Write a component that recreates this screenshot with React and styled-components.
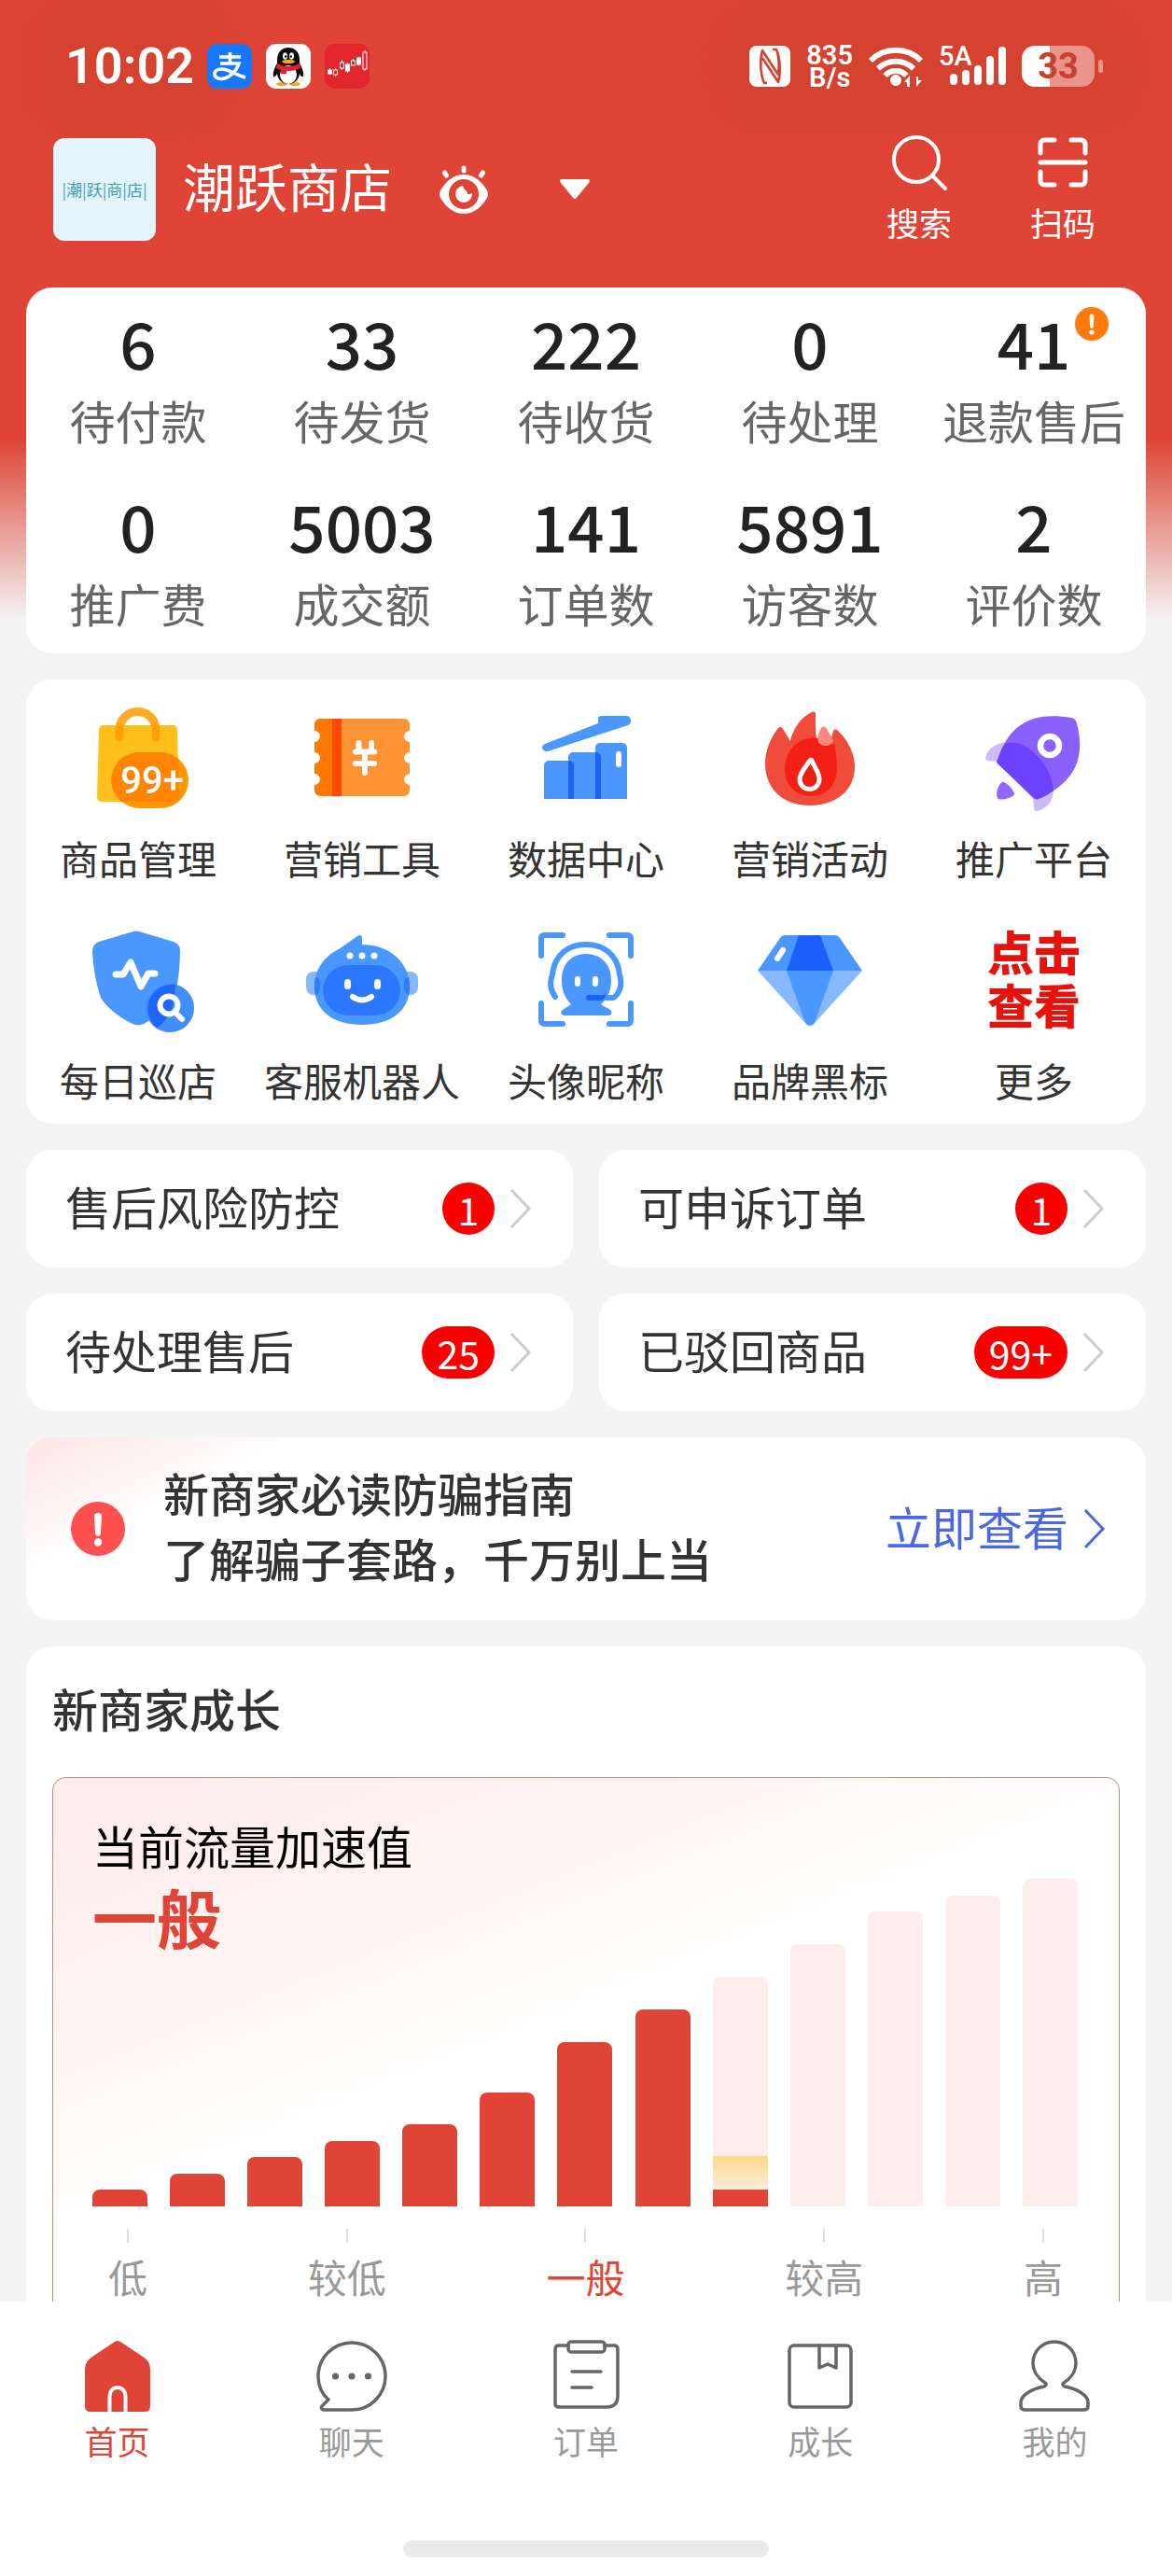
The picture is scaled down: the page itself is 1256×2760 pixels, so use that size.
import React from "react";
import styled, { createGlobalStyle, css } from "styled-components";

const RED = "#df4436";
const BLUE = "#4a98ff";

const stats = [
  { value: "6", label: "待付款" },
  { value: "33", label: "待发货" },
  { value: "222", label: "待收货" },
  { value: "0", label: "待处理" },
  { value: "41", label: "退款售后", alert: true },
  { value: "0", label: "推广费" },
  { value: "5003", label: "成交额" },
  { value: "141", label: "订单数" },
  { value: "5891", label: "访客数" },
  { value: "2", label: "评价数" }
];

const todos = [
  { label: "售后风险防控", count: "1" },
  { label: "可申诉订单", count: "1" },
  { label: "待处理售后", count: "25" },
  { label: "已驳回商品", count: "99+" }
];

const bars = [18, 35, 53, 70, 88, 122, 176, 211, 246, 281, 316, 333, 351];
const CURRENT = 8;

const levels = ["低", "较低", "一般", "较高", "高"];

/* ---------- status bar icons ---------- */

const AlipayIcon = () => (
  <svg width="48" height="48" viewBox="0 0 48 48">
    <rect width="48" height="48" rx="11" fill="#1677ff" />
    <path
      d="M13 14h23M24.500 9v12M14 21h20c-2 6-6 11-11 14-6 4-15 3-15-3 0-5 7-6 13-4 6 2 12 6 20 8"
      fill="none"
      stroke="#fff"
      strokeWidth="3.600"
    />
  </svg>
);

const PenguinIcon = () => (
  <svg width="48" height="48" viewBox="0 0 48 48">
    <rect width="48" height="48" rx="11" fill="#fff" />
    <ellipse cx="17" cy="43" rx="6" ry="2" fill="#fba61b" />
    <ellipse cx="31" cy="43" rx="6" ry="2" fill="#fba61b" />
    <path
      d="M24 4c-8 0-12 6-12 13v4c-3 5-5 10-4 14 1 1 3-1 4-3 1 7 6 11 12 11s11-4 12-11c1 2 3 4 4 3 1-4-1-9-4-14v-4c0-7-4-13-12-13z"
      fill="#0b0b0b"
    />
    <ellipse cx="24" cy="33" rx="9" ry="10" fill="#fff" />
    <path d="M12 21c7 4 17 4 24 0l1 5c-8 4-18 4-26 0z" fill="#e5202c" />
    <path d="M16 26h6v6h-6z" fill="#e5202c" />
    <ellipse cx="20.500" cy="13" rx="2.500" ry="3.800" fill="#fff" />
    <ellipse cx="27.500" cy="13" rx="2.500" ry="3.800" fill="#fff" />
    <circle cx="21.200" cy="13.500" r="1.200" fill="#000" />
    <circle cx="26.800" cy="13.500" r="1.200" fill="#000" />
    <ellipse cx="24" cy="19" rx="7" ry="2.200" fill="#fba61b" />
  </svg>
);

const CandlesIcon = () => (
  <svg width="48" height="48" viewBox="0 0 48 48">
    <rect width="48" height="48" rx="11" fill="#e3262d" />
    <g stroke="#fff" strokeWidth="1">
      <path d="M5.500 26v7M11.500 26v9M18.500 17v11M24.500 20v11M30.500 16v8M36.500 14v9M43 7v22" />
      <rect x="3.500" y="28" width="4" height="4" fill="#fff" />
      <rect x="9.500" y="28" width="4" height="5" fill="#e3262d" />
      <rect x="16.500" y="20" width="4" height="6" fill="#e3262d" />
      <rect x="22.500" y="22" width="4" height="7" fill="#fff" />
      <rect x="28.500" y="18" width="4" height="5" fill="#e3262d" />
      <rect x="34.500" y="15" width="4" height="7" fill="#fff" />
      <rect x="41" y="9" width="4" height="18" fill="#e3262d" />
    </g>
  </svg>
);

const NfcIcon = () => (
  <svg width="44" height="44" viewBox="0 0 44 44">
    <rect width="44" height="44" rx="8" fill="#fff" />
    <path
      d="M19 40h-3c-4-9-5-24-2-35l17 26c1-8 1-17-1-24M25 4h4c4 9 5 24 2 35L14 13"
      fill="none"
      stroke="#d34331"
      strokeWidth="2.600"
      strokeLinejoin="round"
    />
  </svg>
);

const WifiIcon = () => (
  <svg width="58" height="46" viewBox="0 0 58 46">
    <g fill="none" stroke="#fff" strokeWidth="6">
      <path d="M2 17a38 38 0 0 1 54 0" />
      <path d="M10 25.500a27 27 0 0 1 38 0" />
      <path d="M17.500 33a16 16 0 0 1 23 0" />
    </g>
    <circle cx="29" cy="38" r="6" fill="#fff" />
    <path d="M38 40l6-7v12h-3v-5zM57 38l-6 7V34h2v4z" fill="#fff" />
  </svg>
);

const SignalIcon = () => (
  <svg width="62" height="44" viewBox="0 0 62 44">
    <g stroke="#fff" strokeWidth="8" strokeLinecap="round">
      <path d="M6 34v4M19 30v8M32 25v13M45 15v23M58 5v33" />
    </g>
  </svg>
);

/* ---------- header icons ---------- */

const EyeIcon = () => (
  <svg width="60" height="60" viewBox="0 0 60 60">
    <path d="M30 14c11 0 19 7 25 17q2 4 0 8c-6 10-14 17-25 17S11 49 5 39q-2-4 0-8c6-10 14-17 25-17z" fill="#fff" />
    <circle cx="30" cy="35" r="16" fill={RED} />
    <path d="M29 26a9 9 0 1 0 10 8c-2 1-4 1-5 1 1-3-4-4-5-9z" fill="#fff" />
    <path d="M30 7v3M9.500 12l2 3M50.500 12l-2 3" stroke="#fff" strokeWidth="5" strokeLinecap="round" />
  </svg>
);

const CaretIcon = () => (
  <svg width="36" height="24" viewBox="0 0 36 24">
    <path d="M4 3h28L18 20z" fill="#fff" stroke="#fff" strokeWidth="4" strokeLinejoin="round" />
  </svg>
);

const SearchIcon = () => (
  <svg width="60" height="60" viewBox="0 0 60 60">
    <g fill="none" stroke="#fff" strokeWidth="4" strokeLinecap="round">
      <circle cx="27" cy="27" r="24" />
      <path d="M44 44l14 14" />
    </g>
  </svg>
);

const ScanIcon = () => (
  <svg width="60" height="60" viewBox="0 0 60 60">
    <g fill="none" stroke="#fff" strokeWidth="5" strokeLinecap="round">
      <path d="M6 20V10a4 4 0 0 1 4-4h11M39 6h11a4 4 0 0 1 4 4v10M6 40v10a4 4 0 0 0 4 4h11M39 54h11a4 4 0 0 0 4-4V40" />
      <path d="M6 30h48" />
    </g>
  </svg>
);

const AlertIcon = ({ size, fill }) => (
  <svg width={size} height={size} viewBox="0 0 36 36">
    <circle cx="18" cy="18" r="18" fill={fill} />
    <path d="M15.500 10a2.500 2.500 0 0 1 5 0l-.700 11a1.800 1.800 0 0 1-3.600 0z" fill="#fff" />
    <circle cx="18" cy="27" r="2.600" fill="#fff" />
  </svg>
);

const ChevronIcon = ({ color }) => (
  <svg width="24" height="44" viewBox="0 0 24 44">
    <path d="M2 2l19 20L2 42" fill="none" stroke={color} strokeWidth="3" />
  </svg>
);

/* ---------- tool icons, all on a 120 grid ---------- */

const Glyph = ({ children }) => (
  <svg width="120" height="120" viewBox="0 0 120 120">
    {children}
  </svg>
);

const BagIcon = () => (
  <Glyph>
    <path d="M23 25h74a5 5 0 0 1 5 5l2 72a5 5 0 0 1-5 5H21a5 5 0 0 1-5-5l2-72a5 5 0 0 1 5-5z" fill="#ffc01c" />
    <path d="M40 38V30a19.500 19.500 0 0 1 39 0v8" fill="none" stroke="#ff9a00" strokeWidth="9" strokeLinecap="round" opacity=".85" />
    <rect x="32" y="54" width="82" height="60" rx="30" fill="#ff9800" />
    <path d="M62 54h22a30 30 0 0 1 19 8l1 40a5 5 0 0 1-5 5H42a30 30 0 0 1 20-53z" fill="#ff8400" />
    <text x="75" y="98" textAnchor="middle" fontFamily="Roboto, 'Noto Sans', sans-serif" fontWeight="500" fontSize="40" fill="#fff">
      99+
    </text>
  </Glyph>
);

const CouponIcon = () => (
  <Glyph>
    <path d="M15 18h23v83H15a6 6 0 0 1-6-6v-6a6 6 0 0 0 0-12V66a6 6 0 0 0 0-12V43a6 6 0 0 0 0-12v-7a6 6 0 0 1 6-6z" fill="#ff7800" />
    <path d="M28 18h77a6 6 0 0 1 6 6v7a6 6 0 0 0 0 12v11a6 6 0 0 0 0 12v11a6 6 0 0 0 0 12v6a6 6 0 0 1-6 6H28z" fill="#ff9232" />
    <path d="M28 18h10v83H28z" fill="#ff4800" />
    <g stroke="#fff" strokeWidth="6" strokeLinecap="round">
      <path d="M56.500 44v9M70 44v9M53 53.500h20M53 66h20M63 54v22" />
    </g>
  </Glyph>
);

const ChartIcon = () => (
  <Glyph>
    <path d="M16 45l57-22v-5a3 3 0 0 1 3-3h27c6 0 7 8 2 10L19 53c-6 1-8-6-3-8z" fill={BLUE} />
    <path d="M15 104V68a5 5 0 0 1 5-5h22a5 5 0 0 1 5 5v36z" fill={BLUE} />
    <path d="M41 104V59a5 5 0 0 1 5-5h25a5 5 0 0 1 5 5v45z" fill={BLUE} />
    <path d="M70 104V49a5 5 0 0 1 5-5h24a5 5 0 0 1 5 5v55z" fill={BLUE} />
    <path d="M41 104V63h1a5 5 0 0 1 5 5v36zM70 104V54h1a5 5 0 0 1 5 5v45z" fill="#1c62f5" />
    <rect x="92" y="53" width="6" height="17" rx="3" fill="#fff" />
  </Glyph>
);

const FireIcon = () => (
  <Glyph>
    <path
      d="M60 111c-28 0-48-17-48-45 0-14 6-28 14-38 2-2 4-1 5 1l8 13c3-14 12-26 23-31 3-1 4 0 4 2 0 10 0 24 2 31h13c2-5 3-10 4-13 1-2 4-2 5 0 10 9 18 24 18 38 0 26-20 42-48 42z"
      fill="#f04c3c"
    />
    <path d="M61 101c-16 0-28-12-28-28 0-18 11-32 26-34 9-2 24 3 28 8 1 8 2 15 2 24 0 19-12 30-28 30z" fill="#f22015" />
    <path d="M72 28c2-2 4-2 6 1 3 5 5 8 7 13-2 6-13 7-16 1-2-5 1-11 3-15z" fill="#fa8a80" />
    <path d="M60 63c-4 6-11 13-11 20a10.500 10.500 0 0 0 21 0c0-8-6-14-8-20-1-1-1-1-2 0z" fill="#e8200f" stroke="#fff" strokeWidth="5" />
  </Glyph>
);

const RocketIcon = () => (
  <Glyph>
    <path d="M8 60C10 50 20 43 34 43c24 2 44 28 47 52 0 12-8 19-17 22-3 1-4-1-4-3l-1-10-38-40-10-1c-2 0-3-1-3-3z" fill="#cbbcf9" />
    <path d="M100 17c4 1 5 3 6 6 9 36 0 62-41 81-2 1-4 0-5-1L21 66c-1-1-1-2 0-4C32 28 54 9 100 17z" fill="#8a60ff" />
    <path d="M30 44c24-5 50 26 51 51-5 4-10 7-16 9-2 1-4 0-5-1L21 66c-1-1-1-2 0-4 3-8 5-13 9-18z" fill="#6c42ff" />
    <circle cx="77" cy="47" r="10" fill="#8a60ff" stroke="#fff" strokeWidth="6.500" />
    <path d="M26 86c3-2 12 8 13 12s-13 8-17 6c-4-3-1-15 4-18z" fill="#9168fb" />
  </Glyph>
);

const ShieldIcon = () => (
  <Glyph>
    <path d="M55 8q3-1 6 0l37 11q7 3 7 9c0 18-2 35-6 51-7 10-19 20-33 28q-7 3-14-1c-15-8-26-17-32-27-5-15-8-31-9-50q0-7 7-10z" fill={BLUE} />
    <circle cx="94" cy="90" r="26" fill={BLUE} />
    <path d="M100 65a26 26 0 0 0-20 46c9-6 15-13 19-31z" fill="#1b5cf8" />
    <circle cx="94" cy="90" r="26" fill="#2e78ff" opacity=".3" />
    <path d="M36 54h8l8-13 11 26 8-14h7" fill="none" stroke="#fff" strokeWidth="7" strokeLinecap="round" strokeLinejoin="round" />
    <circle cx="93" cy="87" r="9.500" fill="none" stroke="#fff" strokeWidth="6" />
    <path d="M101 96l6 6" stroke="#fff" strokeWidth="6" strokeLinecap="round" />
  </Glyph>
);

const RobotIcon = () => (
  <Glyph>
    <rect x="0" y="51" width="30" height="25" rx="8" fill="#86b8ff" />
    <rect x="90" y="51" width="30" height="25" rx="8" fill="#86b8ff" />
    <path d="M60 22c30 0 51 20 51 45 0 26-20 41-51 41S9 93 9 67c0-18 10-32 26-40l20-14c3-2 5-1 5 2z" fill={BLUE} />
    <path d="M10 57q5 0 5 6v3q0 8-5 10-2-9 0-19zM110 57q-5 0-5 6v3q0 8 5 10 2-9 0-19z" fill="#2f7cff" />
    <rect x="18" y="44" width="83" height="54" rx="27" fill="#2b77ff" />
    <circle cx="47" cy="34" r="3.500" fill="#fff" />
    <circle cx="60" cy="34" r="3.500" fill="#fff" />
    <circle cx="73" cy="34" r="3.500" fill="#fff" />
    <rect x="41" y="59" width="7" height="11" rx="3.500" fill="#fff" />
    <rect x="73" y="59" width="7" height="11" rx="3.500" fill="#fff" />
    <path d="M50 78q10 7 20 0" fill="none" stroke="#fff" strokeWidth="6" strokeLinecap="round" />
  </Glyph>
);

const PortraitIcon = () => (
  <Glyph>
    <g fill="none" stroke={BLUE} strokeWidth="6" strokeLinecap="round">
      <path d="M12 34V15a3 3 0 0 1 3-3h20M85 12h20a3 3 0 0 1 3 3v19M12 85v19a3 3 0 0 0 3 3h20M85 107h20a3 3 0 0 0 3-3V85" />
      <path d="M27 78c-5-7-6-16-3-24 2-20 16-32 36-32s34 12 36 32c3 10 1 18-5 24q-1 1-3 1H64" />
    </g>
    <path d="M34 60c0-17 10-28 26-28s27 11 27 28c0 12-4 20-11 26 3 3 6 3 10 6 3 3 1 6-2 6H37c-4 0-5-4-2-6l9-6c-6-6-10-14-10-26z" fill={BLUE} />
    <path d="M63 76h19q-2 4-5 6H63a3 3 0 0 1 0-6z" fill="#1c62f5" />
    <rect x="48" y="56" width="6" height="11" rx="3" fill="#fff" />
    <rect x="67" y="56" width="6" height="11" rx="3" fill="#fff" />
  </Glyph>
);

const DiamondIcon = () => (
  <Glyph>
    <path d="M4 50h112L65 106q-5 6-10 0z" fill="#86b8ff" />
    <path d="M35 50h50l-20 56q-5 6-10 0z" fill={BLUE} />
    <path d="M33 12h54q3 0 5 3l24 35H4l24-35q2-3 5-3z" fill={BLUE} />
    <path d="M48 12h23l14 38H35z" fill="#1b60fb" />
    <path d="M25 37l6-9" stroke="#fff" strokeWidth="6" strokeLinecap="round" />
  </Glyph>
);

const MoreIcon = () => (
  <MoreText>
    点击
    <br />
    查看
  </MoreText>
);

const tools = [
  { label: "商品管理", Icon: BagIcon },
  { label: "营销工具", Icon: CouponIcon },
  { label: "数据中心", Icon: ChartIcon },
  { label: "营销活动", Icon: FireIcon },
  { label: "推广平台", Icon: RocketIcon },
  { label: "每日巡店", Icon: ShieldIcon },
  { label: "客服机器人", Icon: RobotIcon },
  { label: "头像昵称", Icon: PortraitIcon },
  { label: "品牌黑标", Icon: DiamondIcon },
  { label: "更多", Icon: MoreIcon }
];

/* ---------- tab icons, all on an 80 grid ---------- */

const TabGlyph = ({ children }) => (
  <svg width="80" height="80" viewBox="0 0 80 80" fill="none" stroke="#666" strokeWidth="3.500" strokeLinejoin="round" strokeLinecap="round">
    {children}
  </svg>
);

const HomeIcon = () => (
  <TabGlyph>
    <path
      d="M37 3q3-2 6 0l24 16q8 5 8 13v40q0 6-6 6H11q-6 0-6-6V32q0-8 8-13z"
      fill={RED}
      stroke="none"
    />
    <path d="M31.500 78V61a8.500 9 0 0 1 17 0v17" stroke="#fff" strokeLinecap="butt" strokeWidth="4" />
  </TabGlyph>
);

const ChatIcon = () => (
  <TabGlyph>
    <path d="M40 76H10q-4-1-2-4l7-7C8 59 4 50 4 40a36 36 0 1 1 36 36z" />
    <g fill="#666" stroke="none">
      <circle cx="22.500" cy="40" r="3.600" />
      <circle cx="40" cy="40" r="3.600" />
      <circle cx="57.500" cy="40" r="3.600" />
    </g>
  </TabGlyph>
);

const OrderIcon = () => (
  <TabGlyph>
    <path d="M21 7H11q-4 0-4 4v58q0 4 4 4h51q12 0 12-12V11q0-4-4-4H60" />
    <rect x="21" y="3" width="39" height="11" rx="3" />
    <path d="M25 35h31M25 52h21" />
  </TabGlyph>
);

const GrowthIcon = () => (
  <TabGlyph>
    <rect x="7" y="7" width="66" height="66" rx="5" />
    <path d="M39 7v24l9-4 9 4V7" />
  </TabGlyph>
);

const MeIcon = () => (
  <TabGlyph>
    <path d="M30 47c2 1 1 3-1 4-12 2-25 9-25 17v4q0 4 5 4h62q5 0 5-4v-4c0-8-13-15-25-17-2-1-3-3-1-4 8-5 13-13 13-21 0-13-10-23-23-23S17 13 17 26c0 8 5 16 13 21z" />
  </TabGlyph>
);

const tabs = [
  { label: "首页", Icon: HomeIcon, active: true },
  { label: "聊天", Icon: ChatIcon },
  { label: "订单", Icon: OrderIcon },
  { label: "成长", Icon: GrowthIcon },
  { label: "我的", Icon: MeIcon }
];

const App = () => (
  <Page>
    <GlobalStyle />
    <Main>
      <StatusBar>
        <Clock>10:02</Clock>
        <AppIcons>
          <AlipayIcon />
          <PenguinIcon />
          <CandlesIcon />
        </AppIcons>
        <SystemIcons>
          <NfcIcon />
          <NetSpeed>
            <span>835</span>
            <span>B/s</span>
          </NetSpeed>
          <WifiIcon />
          <Signal>
            <SignalIcon />
            <SignalType>5A</SignalType>
          </Signal>
          <Battery>
            <BatteryBody>33</BatteryBody>
            <BatteryTip />
          </Battery>
        </SystemIcons>
      </StatusBar>

      <Header>
        <Avatar>|潮|跃|商|店|</Avatar>
        <ShopName>潮跃商店</ShopName>
        <EyeButton aria-label="隐藏数据">
          <EyeIcon />
        </EyeButton>
        <IconButton aria-label="切换店铺">
          <CaretIcon />
        </IconButton>
        <Actions>
          <Action>
            <SearchIcon />
            搜索
          </Action>
          <Action>
            <ScanIcon />
            扫码
          </Action>
        </Actions>
      </Header>

      <Sections>
        <StatsCard>
          {stats.map(item => (
            <Stat href="#" key={item.label}>
              <StatValue>
                {item.value}
                {item.alert && (
                  <StatAlert>
                    <AlertIcon size={36} fill="#ff7a0a" />
                  </StatAlert>
                )}
              </StatValue>
              <StatLabel>{item.label}</StatLabel>
            </Stat>
          ))}
        </StatsCard>

        <ToolsCard>
          {tools.map(({ label, Icon }) => (
            <Tool href="#" key={label}>
              <Icon />
              <ToolLabel>{label}</ToolLabel>
            </Tool>
          ))}
        </ToolsCard>

        <TodoGrid>
          {todos.map(item => (
            <Todo href="#" key={item.label}>
              <TodoLabel>{item.label}</TodoLabel>
              <Count>{item.count}</Count>
              <ChevronIcon color="#ccc" />
            </Todo>
          ))}
        </TodoGrid>

        <Notice>
          <AlertIcon size={58} fill="#ff5050" />
          <NoticeText>
            新商家必读防骗指南
            <br />
            了解骗子套路，千万别上当
          </NoticeText>
          <NoticeLink href="#">
            <span>立即查看</span>
            <ChevronIcon color="#4a68e6" />
          </NoticeLink>
        </Notice>

        <GrowthCard>
          <GrowthTitle>新商家成长</GrowthTitle>
          <GrowthPanel>
            <PanelLabel>当前流量加速值</PanelLabel>
            <PanelValue>一般</PanelValue>
            <Bars>
              {bars.map((height, i) => (
                <Bar key={height} $filled={i < CURRENT} style={{ height }}>
                  {i === CURRENT && (
                    <>
                      <BarNext />
                      <BarDone />
                    </>
                  )}
                </Bar>
              ))}
            </Bars>
            <Levels>
              {levels.map(level => (
                <Level key={level} $active={level === "一般"}>
                  {level}
                </Level>
              ))}
            </Levels>
          </GrowthPanel>
        </GrowthCard>
      </Sections>
    </Main>

    <Footer>
      <TabBar>
        {tabs.map(({ label, Icon, active }) => (
          <Tab href="#" key={label} $active={active}>
            <Icon />
            {label}
          </Tab>
        ))}
      </TabBar>
      <HomeHandle />
    </Footer>
  </Page>
);

export default App;

const GlobalStyle = createGlobalStyle`
  * {
    box-sizing: border-box;
  }

  body {
    margin: 0;
    font-family: "Noto Sans CJK SC", "Noto Sans", sans-serif;
    color: #333;
  }

  a {
    color: inherit;
    text-decoration: none;
  }

  button {
    padding: 0;
    border: none;
    background: none;
    color: inherit;
    font-family: inherit;
    cursor: pointer;
  }

  svg {
    display: block;
    flex-shrink: 0;
    overflow: visible;
  }
`;

const card = css`
  background-color: #fff;
  border-radius: 28px;
`;

const Page = styled.div`
  display: flex;
  flex-direction: column;
  height: 100vh;
  background: #f4f4f4;
`;

const Main = styled.main`
  flex: 1;
  min-height: 0;
  overflow: hidden;
  background: linear-gradient(${RED} 470px, #f4f4f4 665px);
`;

const StatusBar = styled.div`
  display: flex;
  align-items: center;
  height: 142px;
  padding: 0 74px 0 70px;
  color: #fff;
  font-family: Roboto, "Noto Sans", sans-serif;
`;

const shade = css`
  background: rgba(170, 60, 20, 0.18);
  box-shadow: 0 0 50px 30px rgba(170, 60, 20, 0.18);
`;

const Clock = styled.div`
  ${shade}
  font-size: 54px;
  font-weight: 600;
  line-height: 60px;
`;

const AppIcons = styled.div`
  display: flex;
  gap: 15px;
  margin-left: 14px;
`;

const SystemIcons = styled.div`
  ${shade}
  display: flex;
  align-items: center;
  gap: 17px;
  margin-left: auto;
`;

const NetSpeed = styled.div`
  display: flex;
  flex-direction: column;
  align-items: center;
  font-size: 29px;
  font-weight: 600;
  line-height: 24px;
`;

const Signal = styled.div`
  position: relative;
  padding-left: 10px;
`;

const SignalType = styled.span`
  position: absolute;
  top: -3px;
  left: 0;
  font-size: 29px;
  font-weight: 500;
  line-height: 28px;
`;

const Battery = styled.div`
  display: flex;
  align-items: center;
  gap: 4px;
`;

const BatteryBody = styled.div`
  width: 78px;
  border-radius: 14px;
  background: linear-gradient(90deg, #fff 38%, #e9958b 38%);
  color: #c8402f;
  font-size: 38px;
  font-weight: 700;
  line-height: 44px;
  text-align: center;
`;

const BatteryTip = styled.div`
  width: 5px;
  height: 14px;
  border-radius: 3px;
  background: #e9958b;
`;

const Header = styled.header`
  display: flex;
  align-items: center;
  height: 122px;
  margin-bottom: 44px;
  padding: 0 82px 0 57px;
  color: #fff;
`;

const Avatar = styled.div`
  width: 110px;
  border-radius: 12px;
  background: #e3f4fd;
  color: #3f9db3;
  font-size: 17px;
  line-height: 110px;
  text-align: center;
  white-space: nowrap;
`;

const ShopName = styled.h1`
  margin: 0 0 0 29px;
  padding-bottom: 10px;
  font-size: 56px;
  font-weight: 400;
  line-height: 80px;
`;

const IconButton = styled.button``;

const EyeButton = styled(IconButton)`
  margin: 0 71px 0 47px;
`;

const Actions = styled.div`
  display: flex;
  gap: 84px;
  margin-left: auto;
`;

const Action = styled.button`
  display: flex;
  flex-direction: column;
  align-items: center;
  gap: 10px;
  font-size: 35px;
  line-height: 48px;
`;

const Sections = styled.div`
  display: flex;
  flex-direction: column;
  gap: 28px;
  padding: 0 28px;
`;

const StatsCard = styled.section`
  ${card}
  display: grid;
  grid-template-columns: repeat(5, 1fr);
`;

const Stat = styled.a`
  display: flex;
  flex-direction: column;
  align-items: center;
  gap: 4px;
  padding: 18px 0 14px;
`;

const StatValue = styled.span`
  position: relative;
  color: #222;
  font-size: 69px;
  font-weight: 500;
  line-height: 80px;
`;

const StatAlert = styled.span`
  position: absolute;
  top: 3px;
  left: calc(100% + 5px);
`;

const StatLabel = styled.span`
  color: #666;
  font-size: 49px;
  line-height: 80px;
  white-space: nowrap;
`;

const ToolsCard = styled.section`
  ${card}
  display: grid;
  grid-template-columns: repeat(5, 1fr);
`;

const Tool = styled.a`
  display: flex;
  flex-direction: column;
  align-items: center;
  gap: 16px;
  padding: 24px 0 14px;
`;

const ToolLabel = styled.span`
  font-size: 42px;
  line-height: 62px;
  padding-bottom: 2px;
  white-space: nowrap;
`;

const MoreText = styled.span`
  height: 120px;
  color: #e8120c;
  font-size: 50px;
  font-weight: 900;
  line-height: 57px;
`;

const TodoGrid = styled.section`
  display: grid;
  grid-template-columns: repeat(2, 1fr);
  gap: 28px;
`;

const Todo = styled.a`
  ${card}
  display: flex;
  align-items: center;
  height: 126px;
  padding: 0 44px 0 42px;
`;

const TodoLabel = styled.span`
  flex: 1;
  padding-bottom: 8px;
  font-size: 49px;
`;

const Count = styled.span`
  min-width: 56px;
  margin-right: 16px;
  padding: 0 16px;
  border-radius: 28px;
  background: #fa0000;
  color: #fff;
  font-size: 41px;
  line-height: 56px;
  text-align: center;
`;

const Notice = styled.section`
  ${card}
  display: flex;
  align-items: center;
  height: 196px;
  padding: 0 43px 0 48px;
  background-image: linear-gradient(153deg, #fce4e4, #fff 134px);
`;

const NoticeText = styled.p`
  flex: 1;
  margin: 0 0 0 41px;
  padding-bottom: 8px;
  font-size: 49px;
  font-weight: 500;
  line-height: 70px;
`;

const NoticeLink = styled.a`
  display: flex;
  align-items: center;
  gap: 16px;
  color: #4a68e6;
  font-size: 49px;

  span {
    padding-bottom: 8px;
  }
`;

const GrowthCard = styled.section`
  ${card}
  padding: 26px 28px;
`;

const GrowthTitle = styled.h2`
  margin: 0 0 34px;
  font-size: 49px;
  font-weight: 500;
  line-height: 80px;
`;

const GrowthPanel = styled.div`
  padding: 40px 44px 40px 42px;
  border: 1px solid #c08c80;
  border-radius: 14px;
  background: linear-gradient(158deg, #ffebec, #fff3f1 220px, #fffaf8 360px, #fff 460px);
`;

const PanelLabel = styled.div`
  color: #000;
  font-size: 49px;
  line-height: 64px;
`;

const PanelValue = styled.div`
  color: ${RED};
  font-size: 69px;
  font-weight: 700;
  line-height: 88px;
`;

const Bars = styled.div`
  display: flex;
  align-items: flex-end;
  justify-content: space-between;
  margin-top: -84px;
`;

const Bar = styled.div`
  display: flex;
  flex-direction: column;
  justify-content: flex-end;
  width: 59px;
  border-radius: 8px 8px 0 0;
  background: ${props => (props.$filled ? RED : "#feeded")};
`;

const BarNext = styled.div`
  height: 36px;
  background: linear-gradient(#fdd98a, #fdebdd);
`;

const BarDone = styled.div`
  height: 18px;
  background: ${RED};
`;

const Levels = styled.div`
  display: flex;
  justify-content: space-between;
  margin-top: 24px;
  padding: 0 16px 0 17px;
`;

const Level = styled.div`
  display: flex;
  flex-direction: column;
  align-items: center;
  gap: 12px;
  color: ${props => (props.$active ? RED : "#999")};
  font-size: 42px;
  line-height: 48px;

  &::before {
    content: "";
    width: 2px;
    height: 15px;
    background: #ddd;
  }
`;

const Footer = styled.footer`
  padding-bottom: 20px;
  background: #fff;
`;

const TabBar = styled.nav`
  display: grid;
  grid-template-columns: repeat(5, 1fr);
  padding: 40px 0 82px;
`;

const Tab = styled.a`
  display: flex;
  flex-direction: column;
  align-items: center;
  gap: 4px;
  color: ${props => (props.$active ? RED : "#999")};
  font-size: 35px;
  line-height: 50px;
`;

const HomeHandle = styled.div`
  width: 392px;
  height: 18px;
  margin: 0 auto;
  border-radius: 9px;
  background: #eaeaea;
`;
